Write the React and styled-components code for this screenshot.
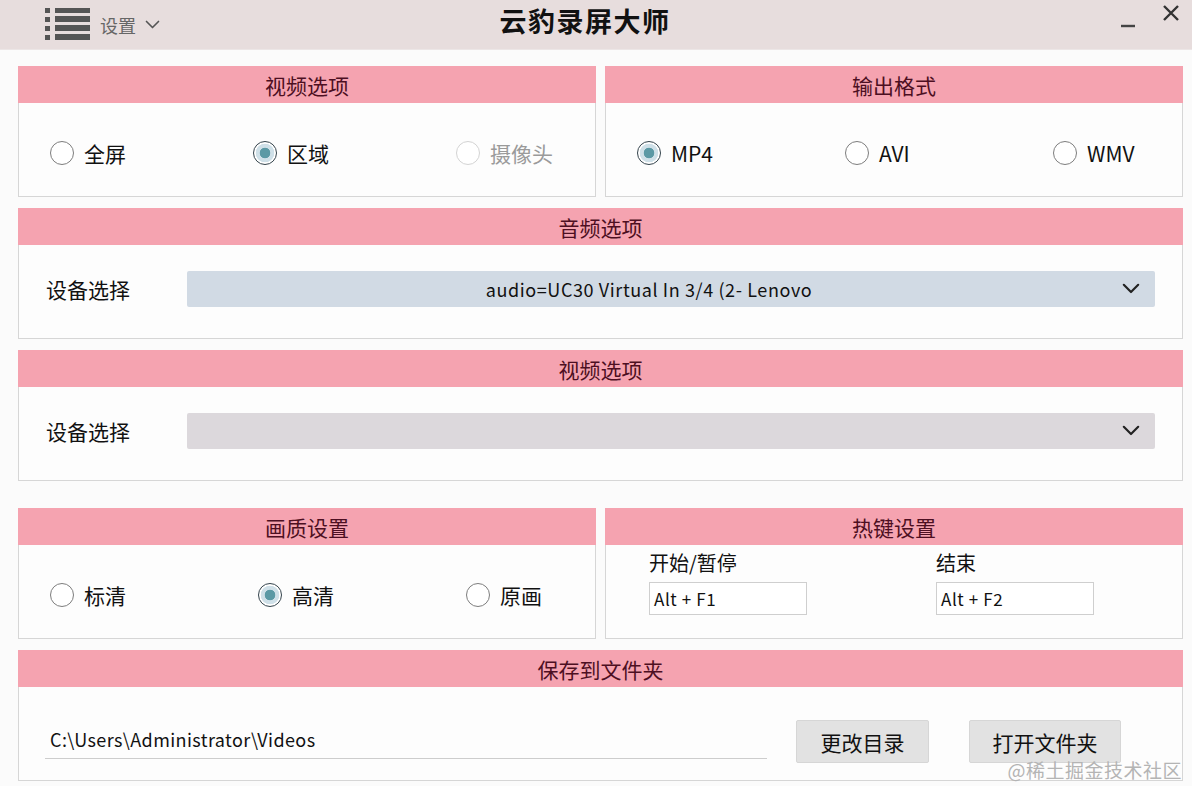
import React from "react";
import styled, { createGlobalStyle } from "styled-components";

const GlobalStyle = createGlobalStyle`
  html, body {
    margin: 0;
    padding: 0;
    background: #fafafa;
  }
  body {
    font-family: "Noto Sans CJK SC", "Noto Sans", sans-serif;
    color: #111;
  }
`;

const Window = styled.div`
  width: 1192px;
  height: 786px;
  position: relative;
  overflow: hidden;
  background: #fbfbfb;
`;

const TitleBar = styled.div`
  height: 50px;
  display: grid;
  grid-template-columns: 1fr auto 1fr;
  align-items: center;
  background: #e7dddd;
  border-bottom: 1px solid #ece6e6;
  box-sizing: border-box;
`;

const Menu = styled.div`
  display: flex;
  align-items: center;
  padding-left: 45px;
  gap: 9px;
  color: #666;
  font-size: 18px;
`;

const Title = styled.div`
  font-size: 27px;
  font-weight: 700;
  letter-spacing: 1.5px;
  color: #111;
  padding-right: 22px;
  padding-bottom: 8px;
`;

const WinControls = styled.div`
  display: flex;
  justify-content: flex-end;
  align-items: flex-start;
  gap: 26px;
  padding-right: 12px;
  padding-bottom: 18px;
`;

const Content = styled.div`
  padding: 16px 9px 0 18px;
  display: flex;
  flex-direction: column;
  gap: 11px;
`;

const Row = styled.div`
  display: grid;
  grid-template-columns: minmax(0, 1fr) minmax(0, 1fr);
  gap: 9px;
  margin-top: ${(p) => p.$offset || 0}px;
`;

const Panel = styled.section`
  height: 131px;
  min-width: 0;
  box-sizing: border-box;
  border: 1px solid #d6d6d6;
  background: #fdfdfd;
  display: flex;
  flex-direction: column;
`;

const PanelHead = styled.div`
  height: 37px;
  flex: none;
  background: #f5a3b0;
  color: #4d0f22;
  font-size: 21px;
  display: flex;
  align-items: center;
  justify-content: center;
  margin: -1px -1px 0;
`;

const RadioRow = styled.div`
  flex: 1;
  display: grid;
  grid-template-columns: ${(p) => p.$step}px ${(p) => p.$step}px auto;
  align-items: center;
  padding: 6px 0 0 31px;
`;

const RadioItem = styled.label`
  display: flex;
  align-items: center;
  gap: 10px;
  font-size: 21px;
  color: ${(p) => (p.$disabled ? "#9a9a9a" : "#111")};
`;

const RadioDot = styled.span`
  width: 24px;
  height: 24px;
  border-radius: 50%;
  box-sizing: border-box;
  flex: none;
  border: 1.6px solid
    ${(p) => (p.$disabled ? "#d3d3d3" : p.$checked ? "#34434c" : "#7d7d7d")};
  background: ${(p) =>
    p.$checked
      ? "radial-gradient(circle, #5b99a5 0 5px, #cfe0e8 5.6px 9px, #fff 9.6px)"
      : "#fff"};
`;

const FieldRow = styled.div`
  flex: 1;
  display: flex;
  align-items: center;
  padding: 0 27px 6px 27px;
`;

const FieldLabel = styled.div`
  width: 141px;
  flex: none;
  font-size: 21px;
  color: #111;
`;

const Select = styled.div`
  flex: 1;
  height: 36px;
  display: flex;
  align-items: center;
  background: ${(p) => p.$bg};
  border-radius: 2px;
  font-size: 18px;
  letter-spacing: 0.6px;
  color: #111;
`;

const SelectText = styled.div`
  flex: 1;
  text-align: center;
`;

const SelectArrow = styled.div`
  width: 40px;
  display: flex;
  justify-content: center;
  padding-right: 4px;
`;

const HotkeyBody = styled.div`
  flex: 1;
  display: grid;
  grid-template-columns: 287px 1fr;
  padding: 4px 0 0 43px;
`;

const HotkeyField = styled.div`
  display: flex;
  flex-direction: column;
  gap: 6px;
`;

const HotkeyLabel = styled.div`
  font-size: 20px;
  color: #111;
  line-height: 27px;
`;

const HotkeyInput = styled.div`
  width: 158px;
  height: 33px;
  box-sizing: border-box;
  border: 1px solid #cfcfcf;
  background: #fff;
  font-size: 17px;
  letter-spacing: 0.6px;
  display: flex;
  align-items: center;
  padding-left: 4px;
`;

const SaveBody = styled.div`
  flex: 1;
  display: flex;
  align-items: flex-end;
  padding: 0 0 17px 26px;
`;

const PathField = styled.div`
  width: 722px;
  box-sizing: border-box;
  border-bottom: 1px solid #cdcdcd;
  font-size: 18px;
  letter-spacing: 0.4px;
  padding: 0 0 6px 5px;
  margin-bottom: 4px;
  color: #111;
`;

const Button = styled.div`
  width: ${(p) => p.$w}px;
  height: 43px;
  margin-left: ${(p) => p.$ml}px;
  box-sizing: border-box;
  background: #e2e2e2;
  border: 1px solid #d6d6d6;
  border-radius: 2px;
  font-size: 21px;
  display: flex;
  align-items: center;
  justify-content: center;
  color: #111;
`;

const Watermark = styled.div`
  position: absolute;
  right: 10px;
  bottom: 3px;
  font-size: 19px;
  color: #b4b4b4;
  letter-spacing: 0.5px;
`;

const ListIcon = () => (
  <svg width="46" height="34" viewBox="0 0 46 34">
    {[2, 11, 20, 29].map((y) => (
      <g key={y} fill="#555">
        <rect x="0" y={y - 2} width="5" height="5" />
        <rect x="10" y={y - 3} width="35" height="6" />
      </g>
    ))}
  </svg>
);

const Chevron = ({ size = 16, color = "#222", w = 2.4 }) => (
  <svg width={size} height={size * 0.6} viewBox="0 0 20 12">
    <path d="M2 2 L10 10 L18 2" fill="none" stroke={color} strokeWidth={w} strokeLinecap="round" strokeLinejoin="round" />
  </svg>
);

const Radio = ({ label, checked, disabled }) => (
  <RadioItem $disabled={disabled}>
    <RadioDot $checked={checked} $disabled={disabled} />
    {label}
  </RadioItem>
);

const RadioPanel = ({ title, items, step }) => (
  <Panel>
    <PanelHead>{title}</PanelHead>
    <RadioRow $step={step}>
      {items.map((it) => (
        <Radio key={it.label} {...it} />
      ))}
    </RadioRow>
  </Panel>
);

const DevicePanel = ({ title, value, bg }) => (
  <Panel>
    <PanelHead>{title}</PanelHead>
    <FieldRow>
      <FieldLabel>设备选择</FieldLabel>
      <Select $bg={bg}>
        <SelectText>{value}</SelectText>
        <SelectArrow>
          <Chevron size={18} />
        </SelectArrow>
      </Select>
    </FieldRow>
  </Panel>
);

export default function App() {
  return (
    <Window>
      <GlobalStyle />
      <TitleBar>
        <Menu>
          <ListIcon />
          <span>设置</span>
          <Chevron size={15} color="#555" w={2.2} />
        </Menu>
        <Title>云豹录屏大师</Title>
        <WinControls>
          <svg width="16" height="16" viewBox="0 0 16 16" style={{ marginTop: 8 }}>
            <path d="M1 14 H15" stroke="#444" strokeWidth="2.4" />
          </svg>
          <svg width="18" height="18" viewBox="0 0 18 18">
            <path d="M2 2 L16 16 M16 2 L2 16" stroke="#333" strokeWidth="2.4" />
          </svg>
        </WinControls>
      </TitleBar>

      <Content>
        <Row>
          <RadioPanel
            title="视频选项"
            step={203}
            items={[
              { label: "全屏" },
              { label: "区域", checked: true },
              { label: "摄像头", disabled: true },
            ]}
          />
          <RadioPanel
            title="输出格式"
            step={208}
            items={[{ label: "MP4", checked: true }, { label: "AVI" }, { label: "WMV" }]}
          />
        </Row>

        <DevicePanel title="音频选项" value="audio=UC30 Virtual In 3/4 (2- Lenovo" bg="#d1dae4" />
        <DevicePanel title="视频选项" value="" bg="#dcd8dc" />

        <Row $offset={16}>
          <RadioPanel
            title="画质设置"
            step={208}
            items={[{ label: "标清" }, { label: "高清", checked: true }, { label: "原画" }]}
          />
          <Panel>
            <PanelHead>热键设置</PanelHead>
            <HotkeyBody>
              <HotkeyField>
                <HotkeyLabel>开始/暂停</HotkeyLabel>
                <HotkeyInput>Alt + F1</HotkeyInput>
              </HotkeyField>
              <HotkeyField>
                <HotkeyLabel>结束</HotkeyLabel>
                <HotkeyInput>Alt + F2</HotkeyInput>
              </HotkeyField>
            </HotkeyBody>
          </Panel>
        </Row>

        <Panel>
          <PanelHead>保存到文件夹</PanelHead>
          <SaveBody>
            <PathField>C:\Users\Administrator\Videos</PathField>
            <Button $w={133} $ml={29}>更改目录</Button>
            <Button $w={152} $ml={40}>打开文件夹</Button>
          </SaveBody>
        </Panel>
      </Content>

      <Watermark>@稀土掘金技术社区</Watermark>
    </Window>
  );
}
